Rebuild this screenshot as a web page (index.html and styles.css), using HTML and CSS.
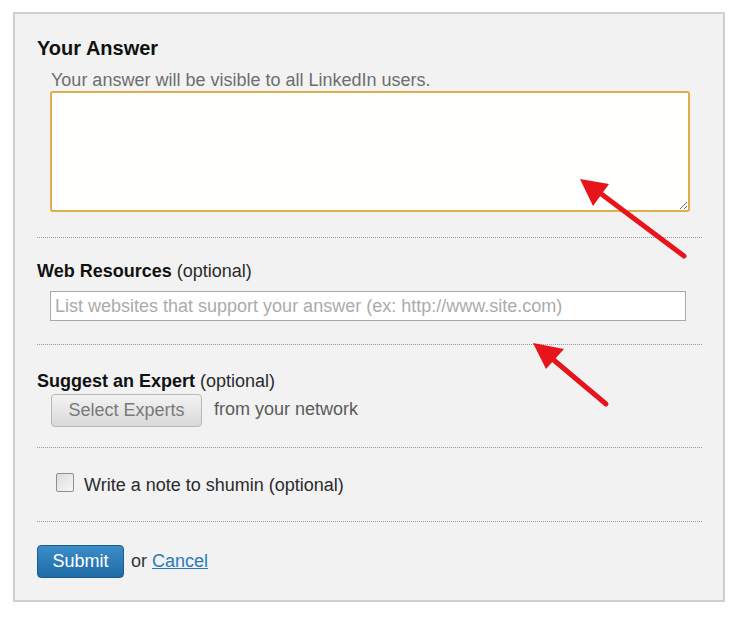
FILE: index.html
```html
<!DOCTYPE html>
<html lang="en">
<head>
  <meta charset="UTF-8" />
  <title>Answer a Question</title>
  <link rel="stylesheet" href="styles.css">
</head>
<body>
  <div class="page">
    <form class="answer-box">
      <h2 class="title">Your Answer</h2>
      <p class="hint">Your answer will be visible to all LinkedIn users.</p>
      <textarea class="answer-text"></textarea>

      <div class="divider"></div>

      <div class="label"><strong>Web Resources</strong> (optional)</div>
      <input class="web-input" type="text" placeholder="List websites that support your answer (ex: http://www.site.com)">

      <div class="divider divider-web"></div>

      <div class="label label-expert"><strong>Suggest an Expert</strong> (optional)</div>
      <div class="expert-row">
        <button type="button" class="btn-select">Select Experts</button>
        <span class="network">from your network</span>
      </div>

      <div class="divider divider-note"></div>

      <label class="note-row">
        <input type="checkbox" class="note-check">
        <span>Write a note to shumin (optional)</span>
      </label>

      <div class="divider divider-submit"></div>

      <div class="submit-row">
        <button type="button" class="btn-submit">Submit</button>
        <span class="or">or <a href="#" class="cancel">Cancel</a></span>
      </div>
    </form>

    <!-- annotation arrows drawn over the form -->
    <svg class="arrows" width="740" height="618" viewBox="0 0 740 618">
      <line x1="684" y1="256" x2="592" y2="187" stroke="#e8141b" stroke-width="5" stroke-linecap="round" />
      <polygon points="580,179 609,184 593,206" fill="#e8141b" />
      <line x1="606" y1="404" x2="543" y2="351" stroke="#e8141b" stroke-width="5" stroke-linecap="round" />
      <polygon points="533,343 564,349 546,369" fill="#e8141b" />
    </svg>
  </div>
</body>
</html>
```

FILE: styles.css
```css
* {
  margin: 0;
  padding: 0;
  box-sizing: border-box;
}

body {
  font-family: 'Liberation Sans', Arial, sans-serif;
  background: #fff;
  color: #333;
}

.page {
  position: relative;
  width: 740px;
  height: 618px;
  padding: 12px 13px;
}

.answer-box {
  width: 712px;
  background: #f2f2f2;
  border: 2px solid #cfcfcf;
  padding: 22px 21px 22px 22px;
}

.title {
  font-size: 20px;
  line-height: 24px;
  font-weight: bold;
  color: #111;
}

.hint {
  margin: 9px 0 0 14px;
  font-size: 18px;
  line-height: 22px;
  color: #6e6e6e;
}

.answer-text {
  display: block;
  margin-left: 13px;
  width: 640px;
  height: 121px;
  border: 2px solid #dfae4c;
  border-radius: 3px;
  background: #fffffd;
  font-family: inherit;
  font-size: 18px;
  outline: none;
}

.divider {
  margin-top: 25px;
  border-top: 1px dotted #9a9a9a;
}

.label {
  margin-top: 22px;
  font-size: 18px;
  line-height: 22px;
  color: #2b2b2b;
}

.label strong {
  color: #111;
}

.label-expert {
  margin-top: 25px;
}

.web-input {
  display: block;
  margin: 9px 0 0 13px;
  width: 636px;
  height: 30px;
  padding: 0 4px;
  border: 1px solid #a9a9a9;
  background: #fff;
  font-family: inherit;
  font-size: 18px;
  outline: none;
}

.web-input::placeholder {
  color: #ababab;
}

.divider-web {
  margin-top: 23px;
}

.expert-row {
  display: flex;
  align-items: center;
  margin: 2px 0 0 14px;
}

.btn-select {
  width: 151px;
  height: 33px;
  border: 1px solid #b8b8b8;
  border-radius: 4px;
  background: linear-gradient(#f3f3f3, #d9d9d9);
  font-family: inherit;
  font-size: 18px;
  color: #7a7a7a;
}

.network {
  margin: 0 0 3px 12px;
  font-size: 18px;
  color: #5a5a5a;
}

.divider-note {
  margin-top: 20px;
}

.note-row {
  display: flex;
  align-items: flex-start;
  margin: 26px 0 0 19px;
  font-size: 18px;
  line-height: 22px;
  color: #2b2b2b;
}

.note-check {
  appearance: none;
  width: 18px;
  height: 19px;
  margin: -1px 10px 0 0;
  border: 1px solid #8e8e8e;
  border-radius: 2px;
  background: linear-gradient(135deg, #dcdcdc, #f7f7f7);
}

.divider-submit {
  margin-top: 25px;
}

.submit-row {
  display: flex;
  align-items: center;
  margin-top: 23px;
}

.btn-submit {
  width: 87px;
  height: 33px;
  border: 1px solid #1c5d8f;
  border-radius: 4px;
  background: linear-gradient(#3c8dc8, #1f6ba7);
  font-family: inherit;
  font-size: 18px;
  color: #fff;
}

.or {
  margin-left: 7px;
  font-size: 18px;
  color: #333;
}

.cancel {
  color: #2a7ab8;
}

.arrows {
  position: absolute;
  top: 0;
  left: 0;
  pointer-events: none;
}
```
